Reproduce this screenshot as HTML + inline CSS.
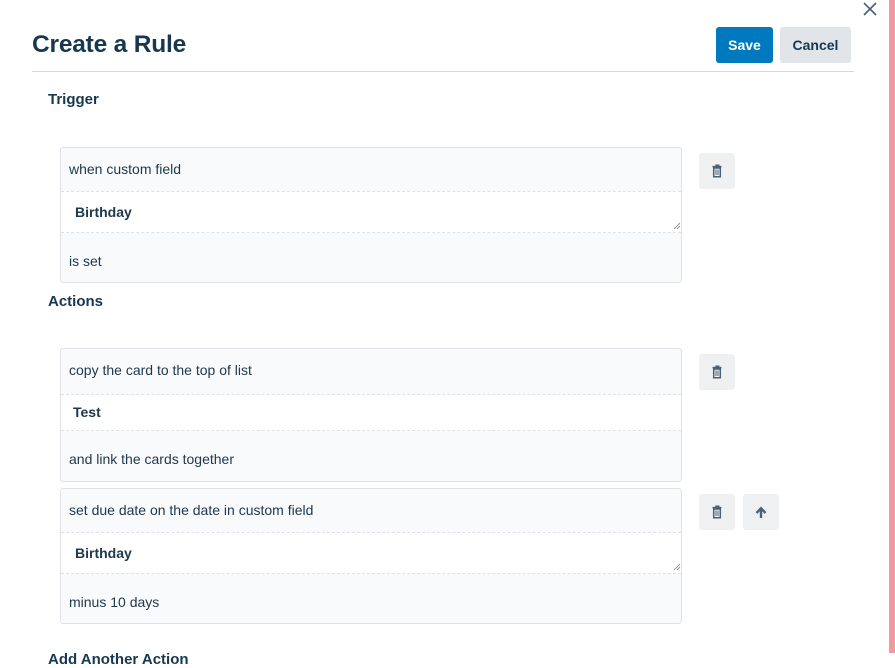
<!DOCTYPE html>
<html><head><style>
*{margin:0;padding:0;box-sizing:border-box}
body{width:895px;height:653px;overflow:hidden;background:#fff;font-family:"Liberation Sans",Arial,sans-serif;color:#21394d;position:relative}
.a{position:absolute}
h1{position:absolute;left:32px;top:31px;font-size:24.5px;font-weight:bold;color:#17384f;letter-spacing:-0.2px}
h2{position:absolute;font-size:15px;font-weight:bold;color:#17384f}
.btn{position:absolute;border-radius:3px;font-size:14px;font-weight:bold;text-align:center;line-height:36px}
.box{position:absolute;left:60px;width:622px;border:1px solid #dfe1e6;border-radius:3px;background:#f9fafc;overflow:hidden}
.row{position:absolute;left:0;right:0;font-size:14px;padding-left:8px}
.mid{background:#fff;border-top:1px dashed #dfe1e6;border-bottom:1px dashed #dfe1e6;font-weight:bold;padding-left:14px}
.ib{position:absolute;width:36px;height:36px;background:#eff0f2;border-radius:3px}
.ib svg{position:absolute;left:11px;top:11px}
</style></head><body>
<div class="a" style="left:889px;top:0;width:6px;height:653px;background:#ef9aa0"></div>
<svg class="a" style="left:862px;top:1px" width="16" height="16" viewBox="0 0 16 16"><path d="M2 2L14 14M14 2L2 14" stroke="#505f79" stroke-width="1.6"/></svg>
<h1>Create a Rule</h1>
<div class="btn" style="left:716px;top:27px;width:57px;background:#0079bf;color:#fff">Save</div>
<div class="btn" style="left:780px;top:27px;width:71px;background:#e1e4e8;color:#17384f">Cancel</div>
<div class="a" style="left:32px;top:71px;width:822px;height:1px;background:#d6d8dc"></div>
<h2 style="left:48px;top:91px">Trigger</h2>
<div class="box" style="top:147px;height:136px">
<div class="row" style="top:0;height:43px;line-height:43px">when custom field</div>
<div class="row mid" style="top:43px;height:42px;line-height:40px">Birthday</div>
<div class="row" style="top:85px;height:50px;line-height:56px">is set</div>
</div>
<h2 style="left:48px;top:293px">Actions</h2>
<div class="box" style="top:348px;height:134px">
<div class="row" style="top:0;height:45px;line-height:43px">copy the card to the top of list</div>
<div class="row mid" style="top:45px;height:37px;line-height:35px;padding-left:12px">Test</div>
<div class="row" style="top:82px;height:51px;line-height:57px">and link the cards together</div>
</div>
<div class="box" style="top:488px;height:136px">
<div class="row" style="top:0;height:43px;line-height:43px">set due date on the date in custom field</div>
<div class="row mid" style="top:43px;height:42px;line-height:40px">Birthday</div>
<div class="row" style="top:85px;height:50px;line-height:57px">minus 10 days</div>
</div>
<svg class="a" style="left:673px;top:222px" width="8" height="8"><path d="M1 7L7 1M4 7L7 4" stroke="#777" stroke-width="0.8"/></svg>
<svg class="a" style="left:673px;top:563px" width="8" height="8"><path d="M1 7L7 1M4 7L7 4" stroke="#777" stroke-width="0.8"/></svg>
<div class="ib" style="left:699px;top:153px"><svg width="14" height="14" viewBox="0 0 14 14"><path d="M2.5 2.6h9M5.3 1.3h3.4v1.3M3.7 4h6.6v8.7H3.7z" fill="none" stroke="#4c6173" stroke-width="1.5"/><path d="M6 5.5v5.5M8 5.5v5.5" stroke="#4c6173" stroke-width="1"/></svg></div>
<div class="ib" style="left:699px;top:354px"><svg width="14" height="14" viewBox="0 0 14 14"><path d="M2.5 2.6h9M5.3 1.3h3.4v1.3M3.7 4h6.6v8.7H3.7z" fill="none" stroke="#4c6173" stroke-width="1.5"/><path d="M6 5.5v5.5M8 5.5v5.5" stroke="#4c6173" stroke-width="1"/></svg></div>
<div class="ib" style="left:699px;top:494px"><svg width="14" height="14" viewBox="0 0 14 14"><path d="M2.5 2.6h9M5.3 1.3h3.4v1.3M3.7 4h6.6v8.7H3.7z" fill="none" stroke="#4c6173" stroke-width="1.5"/><path d="M6 5.5v5.5M8 5.5v5.5" stroke="#4c6173" stroke-width="1"/></svg></div>
<div class="ib" style="left:743px;top:494px"><svg width="14" height="14" viewBox="0 0 14 14"><path d="M7 13V4M2.5 8L7 3.2L11.5 8" fill="none" stroke="#4c6173" stroke-width="2.4"/></svg></div>
<h2 style="left:48px;top:651px">Add Another Action</h2>
</body></html>
